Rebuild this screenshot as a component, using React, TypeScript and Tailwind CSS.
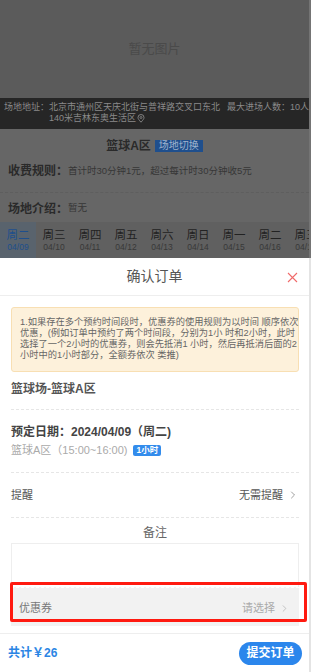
import { ChevronRight } from "lucide-react";

const FONT = { fontFamily: '"Liberation Sans", "Noto Sans CJK SC", sans-serif' };

const days = [
  ["周二", "04/09"],
  ["周三", "04/10"],
  ["周四", "04/11"],
  ["周五", "04/12"],
  ["周六", "04/13"],
  ["周日", "04/14"],
  ["周一", "04/15"],
  ["周二", "04/16"],
  ["周三", "04/17"],
];

const notice = [
  "1.如果存在多个预约时间段时，优惠券的使用规则为以时间 顺序依次",
  "优惠，(例如订单中预约了两个时间段，分别为1小 时和2小时，此时",
  "选择了一个2小时的优惠券，则会先抵消1 小时，然后再抵消后面的2",
  "小时中的1小时部分，全额券依次 类推)",
];

function PinIcon() {
  return (
    <svg width="8" height="9" viewBox="0 0 8 9" className="ml-[1px] inline-block">
      <path d="M4 8.2 C2 6 1 4.8 1 3.5 A3 3 0 0 1 7 3.5 C7 4.8 6 6 4 8.2Z" fill="none" stroke="#8a8a8a" strokeWidth="0.9" />
      <circle cx="4" cy="3.5" r="1" fill="none" stroke="#8a8a8a" strokeWidth="0.8" />
    </svg>
  );
}

// Venue page behind the dimmed overlay
function VenuePage() {
  return (
    <div className="flex flex-col">
      <div className="flex h-[98px] items-center justify-center bg-[#5b5b5b] text-[13px] text-[#4a4a4a]">
        暂无图片
      </div>
      <div className="flex h-[31px] justify-between bg-[#262626] pl-[4px] pt-[4px] text-[9px] leading-[11px] text-[#8a8a8a]">
        <div className="flex">
          <span>场地地址：</span>
          <div>
            <div>北京市通州区天庆北街与普祥路交叉口东北</div>
            <div className="flex items-center">
              140米吉林东奥生活区
              <PinIcon />
            </div>
          </div>
        </div>
        <span className="whitespace-nowrap">最大进场人数：10人</span>
      </div>
      <div className="flex h-[34px] items-center justify-center gap-[4px] bg-[#666]">
        <span className="text-[12px] font-bold text-[#2a2a2a]">篮球A区</span>
        <span className="bg-[#1f4f8d] px-[4px] text-[10px] leading-[12px] text-[#9fb3cd]">场地切换</span>
      </div>
      <div className="flex h-[16px] items-center bg-[#666] pl-[8px]">
        <span className="text-[12px] font-bold text-[#2a2a2a]">收费规则：</span>
        <span className="text-[9.5px] text-[#363636]">首计时30分钟1元，超过每计时30分钟收5元</span>
      </div>
      <div className="h-[14px] border-b border-dashed border-[#5e5e5e] bg-[#666]" />
      <div className="flex h-[29px] items-center bg-[#666] pl-[8px] pt-[2px]">
        <span className="text-[12px] font-bold text-[#2a2a2a]">场地介绍：</span>
        <span className="text-[9.5px] text-[#363636]">暂无</span>
      </div>
      <div className="flex h-[37px] overflow-hidden bg-[#606060]">
        {days.map(([d, date], i) => (
          <div
            key={i}
            className={
              "flex w-[36px] shrink-0 flex-col items-center justify-center " +
              (i === 0 ? "bg-[#59636d]" : "")
            }
          >
            <span className={"text-[11.5px] leading-[13px] " + (i === 0 ? "text-[#1e4f8c]" : "text-[#222]")}>
              {d}
            </span>
            <span className={"text-[8.5px] leading-[11px] " + (i === 0 ? "text-[#1e4f8c]" : "text-[#383838]")}>
              {date}
            </span>
          </div>
        ))}
      </div>
      <div className="h-[10px] bg-[#5a5a5a]" />
    </div>
  );
}

function ConfirmSheet() {
  return (
    <div className="absolute bottom-0 left-0 top-[258px] flex w-[309px] flex-col bg-white">
      <div className="relative flex h-[38px] shrink-0 items-center justify-center border-b border-[#eee] text-[14px] text-[#555]">
        确认订单
        <svg width="11" height="11" viewBox="0 0 11 11" className="absolute right-[11px] top-[14px]">
          <path d="M1 1 L10 10 M10 1 L1 10" stroke="#f06a6a" strokeWidth="1.1" />
        </svg>
      </div>
      <div className="flex flex-1 flex-col pl-[11px] pr-[10px]">
        <div className="mt-[11px] h-[65px] rounded-[3px] border border-[#f8dfb3] bg-[#fdf1db] pl-[8px] pt-[9px] text-[9.25px] leading-[11px] text-[#666]">
          {notice.map((l, i) => (
            <div key={i} className="whitespace-nowrap">
              {l}
            </div>
          ))}
        </div>
        <div className="border-b border-dashed border-[#e6e6e6] pb-[12px] pt-[10px] text-[12px] font-bold leading-[15px] text-[#555]">
          篮球场-篮球A区
        </div>
        <div className="border-b border-dashed border-[#e6e6e6] pb-[14px] pt-[14px]">
          <div className="text-[12px] font-bold leading-[16px] text-[#444]">预定日期：2024/04/09（周二)</div>
          <div className="mt-[2px] flex items-center text-[11px] leading-[16px] text-[#aaa]">
            篮球A区（15:00~16:00)
            <span className="ml-[6px] rounded-[2px] bg-[#338cec] px-[3px] text-[8.5px] font-bold leading-[11px] text-white">
              1小时
            </span>
          </div>
        </div>
        <div className="flex h-[45px] items-center justify-between border-b border-dashed border-[#e6e6e6] text-[11px] text-[#555]">
          <span>提醒</span>
          <span className="flex items-center gap-[4px]">
            无需提醒
            <ChevronRight size={12} strokeWidth={1.4} color="#777" />
          </span>
        </div>
        <div className="pt-[6px] text-center text-[12px] leading-[18px] text-[#666]">备注</div>
        <div className="mt-[1px] h-[44px] border border-b-0 border-[#eee]" />
        <div className="flex h-[39px] items-center justify-between border-t border-dashed border-white bg-[#f2f2f2] pl-[8px] pr-[9px] pt-[3px] text-[11px]">
          <span className="text-[#777]">优惠券</span>
          <span className="flex items-center gap-[4px] text-[#aaa]">
            请选择
            <ChevronRight size={11} strokeWidth={1.4} color="#aaa" />
          </span>
        </div>
      </div>
      <div className="flex h-[39px] shrink-0 items-center justify-between border-t border-[#eee] pl-[8px] pr-[7px]">
        <span className="text-[12px] font-bold text-[#2b85e4]">共计￥26</span>
        <span className="flex h-[23px] w-[63px] items-center justify-center rounded-full bg-[#2b86ec] text-[12px] font-bold text-white">
          提交订单
        </span>
      </div>
    </div>
  );
}

export default function App() {
  return (
    <div className="flex h-[672px] w-[311px] overflow-hidden bg-white" style={FONT}>
      <div className="relative h-[672px] w-[309px]">
        <VenuePage />
        <ConfirmSheet />
        {/* red highlight annotation */}
        <div className="absolute left-[10px] top-[582px] h-[40px] w-[297px] rounded-[2px] border-[3px] border-[#ff1a10]" />
      </div>
      <div className="flex w-[2px] flex-col">
        <div className="h-[258px] bg-[#747474]" />
        <div className="flex-1 bg-[#e4e4e4]" />
      </div>
    </div>
  );
}
